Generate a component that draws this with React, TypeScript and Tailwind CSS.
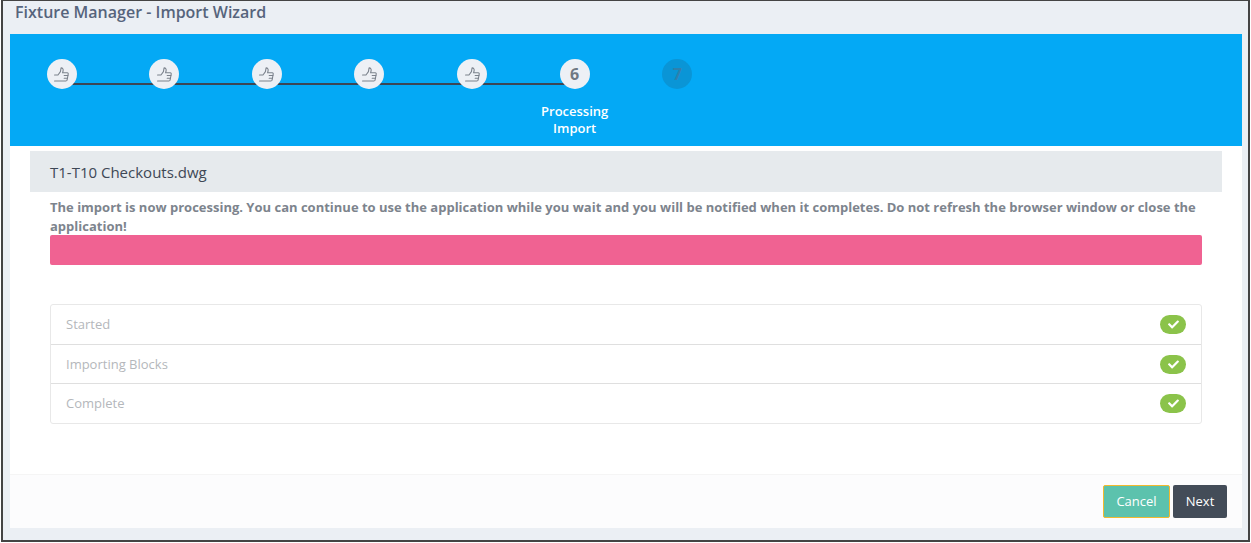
import { FaCheck } from "react-icons/fa";

const steps = [1, 2, 3, 4, 5, 6, 7];

function Thumb() {
  return (
    <svg viewBox="0 0 14 14" className="h-[15px] w-[15px]" fill="none" stroke="#7b828c" strokeWidth="1" strokeLinejoin="round" strokeLinecap="round">
      <path d="M0.5 7.5H3.7L6 4.3L6.6 0.8Q8.9 1 8.5 3.5L8 5.4H12.3Q13.6 5.5 13.2 7L12.2 12.3Q12 13 11.1 13H0.5" />
      <path d="M9.5 8H13M9.5 10.5H12.6" />
    </svg>
  );
}

function Step({ n }: { n: number }) {
  const done = n < 6;
  const current = n === 6;
  return (
    <div className="relative flex w-[102.6px] shrink-0 flex-col items-center">
      {n < 6 && <div className="absolute left-[51px] top-[49px] h-[2px] w-[103px] bg-[#3d4654]" />}
      <div
        className={
          "relative mt-[25px] flex h-[30px] w-[30px] items-center justify-center rounded-full text-[16px] font-bold " +
          (n === 7 ? "bg-[#0a95d6] text-[#2f80ad]" : "bg-[#edf0f5] text-[#6f7883]")
        }
      >
        {done ? <Thumb /> : n}
      </div>
      {current && (
        <div className="mt-[14px] w-[90px] text-center text-[13px] font-semibold leading-[17px] text-white">
          Processing Import
        </div>
      )}
    </div>
  );
}

function Row({ label, last, h }: { label: string; last?: boolean; h: string }) {
  return (
    <div
      className={
        "flex items-center justify-between pl-[15px] pr-[15px] text-[13px] text-[#b4b7bb] " +
        h +
        (last ? "" : " border-b border-[#dfdfdf]")
      }
    >
      <span>{label}</span>
      <span className="flex h-[19px] w-[26px] items-center justify-center rounded-full bg-[#8bc34a]">
        <FaCheck className="h-[11px] w-[11px] text-white" />
      </span>
    </div>
  );
}

export default function App() {
  return (
    <div className="h-[543px] w-[1251px] overflow-hidden bg-white font-['Open_Sans','Noto_Sans',sans-serif]">
      <div className="ml-px flex h-[542px] w-[1249px] flex-col border-2 border-[#444444] border-t-[1px] bg-[#ebeff4] pl-[7px] pr-[6px]">
        <div className="flex h-[33px] shrink-0 items-start pl-[5px] pt-[1px] text-[16px] font-semibold leading-[20px] text-[#56647c]">
          Fixture Manager - Import Wizard
        </div>
        <div className="flex h-[112px] shrink-0 bg-[#04a9f5] pl-[0.4px]">
          {steps.map((n) => (
            <Step key={n} n={n} />
          ))}
        </div>
        <div className="flex h-[382px] shrink-0 flex-col rounded-b-[2px] bg-white">
          <div className="flex-1 px-[20px] pt-[5px]">
            <div className="flex h-[41px] items-center bg-[#e6eaed] pl-[20px] pt-[1px] text-[15px] text-[#3e4855]">
              T1-T10 Checkouts.dwg
            </div>
            <div className="px-[20px]">
              <p className="mt-[6px] -mb-px text-[13px] font-bold leading-[19px] text-[#7d848d]">
                The import is now processing. You can continue to use the application while you wait and you will be notified when it completes. Do not refresh the browser window or close the application!
              </p>
              <div className="h-[30px] rounded-[2px] bg-[#f06292]" />
              <div className="mt-[39px] rounded-[3px] border border-[#e8e8e8]">
                <Row label="Started" h="h-[40px]" />
                <Row label="Importing Blocks" h="h-[39px] pt-[1px]" />
                <Row label="Complete" h="h-[39px]" last />
              </div>
            </div>
          </div>
          <div className="flex h-[54px] shrink-0 items-start justify-end gap-[3px] border-t border-[#f5f5f5] bg-[#fcfcfd] pr-[15px] pt-[10px]">
            <button className="h-[33px] w-[67px] rounded-[2px] border border-[#f2b92f] bg-[#5cc2ad] text-[13px] text-white">
              Cancel
            </button>
            <button className="h-[33px] w-[54px] rounded-[2px] bg-[#434c58] text-[13px] text-white">
              Next
            </button>
          </div>
        </div>
      </div>
    </div>
  );
}
